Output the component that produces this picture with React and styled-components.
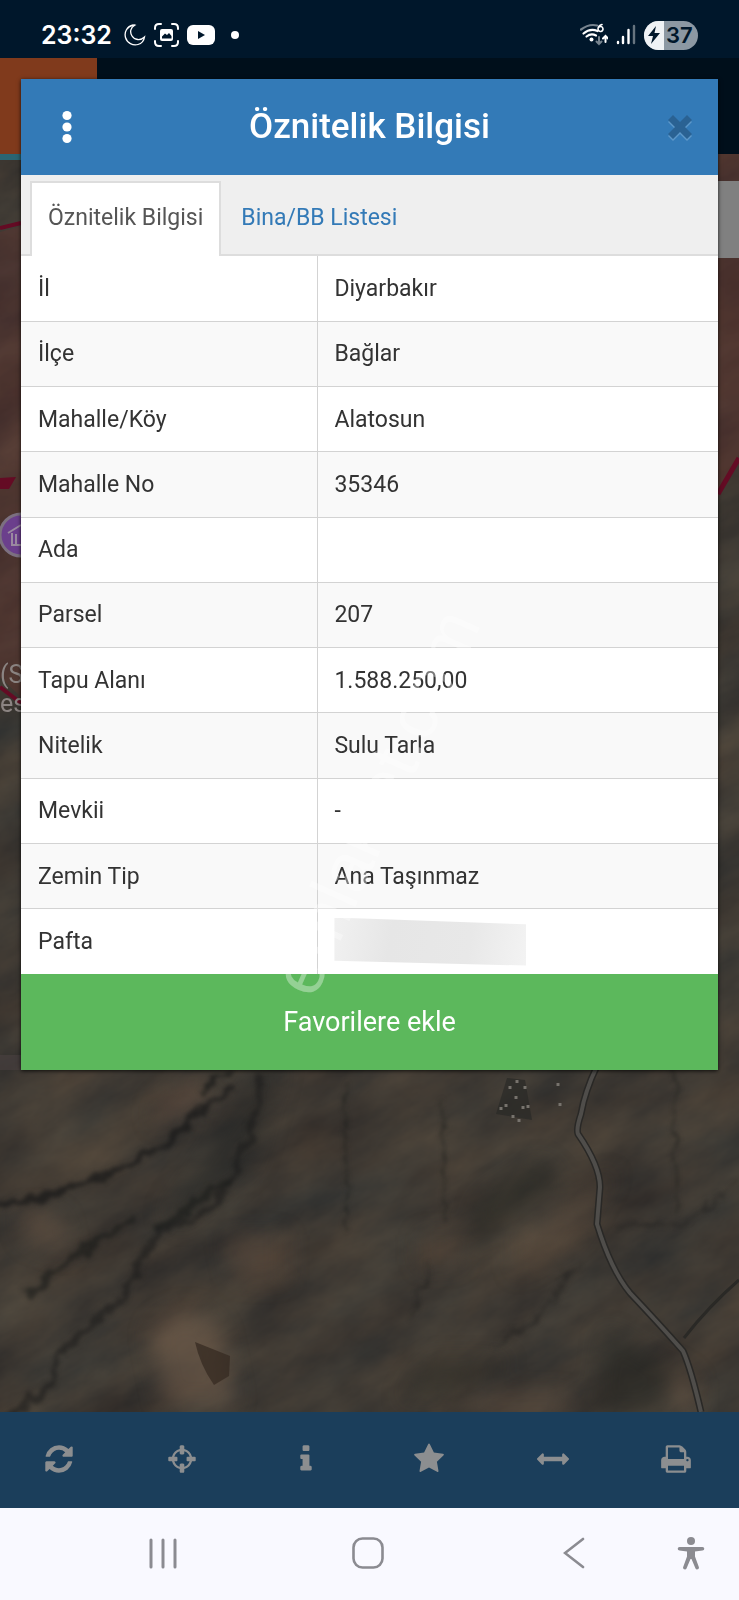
import React, { useState } from 'react'
import styled, { createGlobalStyle } from 'styled-components'

const attributes = [
  ['İl', 'Diyarbakır'],
  ['İlçe', 'Bağlar'],
  ['Mahalle/Köy', 'Alatosun'],
  ['Mahalle No', '35346'],
  ['Ada', ''],
  ['Parsel', '207'],
  ['Tapu Alanı', '1.588.250,00'],
  ['Nitelik', 'Sulu Tarla'],
  ['Mevkii', '-'],
  ['Zemin Tip', 'Ana Taşınmaz'],
  ['Pafta', null],
]

const tools = [
  {
    label: 'Yenile',
    d: 'M1639 1056q0 5-1 7-64 268-268 434.5t-478 166.5q-146 0-282.5-55t-243.5-157l-129 129q-19 19-45 19t-45-19-19-45v-448q0-26 19-45t45-19h448q26 0 45 19t19 45-19 45l-137 137q71 66 161 102t187 36q134 0 250-65t186-179q11-17 53-117 8-23 30-23h192q13 0 22.5 9.5t9.5 22.5zm25-800v448q0 26-19 45t-45 19h-448q-26 0-45-19t-19-45 19-45l138-138q-148-137-349-137-134 0-250 65t-186 179q-11 17-53 117-8 23-30 23h-199q-13 0-22.5-9.5t-9.5-22.5v-7q65-268 270-434.5t480-166.5q146 0 284 55.5t245 156.5l130-129q19-19 45-19t45 19 19 45z',
  },
  {
    label: 'Konumum',
    d: 'M1325 1024h-109q-26 0-45-19t-19-45v-128q0-26 19-45t45-19h109q-32-108-112.5-188.5t-188.5-112.5v109q0 26-19 45t-45 19h-128q-26 0-45-19t-19-45v-109q-108 32-188.5 112.5t-112.5 188.5h109q26 0 45 19t19 45v128q0 26-19 45t-45 19h-109q32 108 112.5 188.5t188.5 112.5v-109q0-26 19-45t45-19h128q26 0 45 19t19 45v109q108-32 188.5-112.5t112.5-188.5zm339-192v128q0 26-19 45t-45 19h-143q-37 161-154.5 278.5t-278.5 154.5v143q0 26-19 45t-45 19h-128q-26 0-45-19t-19-45v-143q-161-37-278.5-154.5t-154.5-278.5h-143q-26 0-45-19t-19-45v-128q0-26 19-45t45-19h143q37-161 154.5-278.5t278.5-154.5v-143q0-26 19-45t45-19h128q26 0 45 19t19 45v143q161 37 278.5 154.5t154.5 278.5h143q26 0 45 19t19 45z',
  },
  {
    label: 'Bilgi',
    d: 'M1216 1344v128q0 26-19 45t-45 19h-512q-26 0-45-19t-19-45v-128q0-26 19-45t45-19h64v-384h-64q-26 0-45-19t-19-45v-128q0-26 19-45t45-19h384q26 0 45 19t19 45v576h64q26 0 45 19t19 45zm-128-1152v192q0 26-19 45t-45 19h-256q-26 0-45-19t-19-45v-192q0-26 19-45t45-19h256q26 0 45 19t19 45z',
  },
  {
    label: 'Favoriler',
    d: 'M1728 647q0 22-26 48l-363 354 86 500q1 7 1 20 0 21-10.5 35.5t-30.5 14.5q-19 0-40-12l-449-236-449 236q-22 12-40 12-21 0-31.5-14.5t-10.5-35.5q0-6 2-20l86-500-364-354q-25-27-25-48 0-37 56-46l502-73 225-455q19-41 49-41t49 41l225 455 502 73q56 9 56 46z',
  },
  {
    label: 'Ölçüm',
    d: 'M1792 896q0 26-19 45l-256 256q-19 19-45 19t-45-19-19-45v-128h-1024v128q0 26-19 45t-45 19-45-19l-256-256q-19-19-19-45t19-45l256-256q19-19 45-19t45 19 19 45v128h1024v-128q0-26 19-45t45-19 45 19l256 256q19 19 19 45z',
  },
  {
    label: 'Yazdır',
    d: 'M448 1536h896v-256h-896v256zm0-640h896v-384h-160q-40 0-68-28t-28-68v-160h-640v640zm1152 64q0-26-19-45t-45-19-45 19-19 45 19 45 45 19 45-19 19-45zm128 0v416q0 13-9.5 22.5t-22.5 9.5h-224v160q0 40-28 68t-68 28h-960q-40 0-68-28t-28-68v-160h-224q-13 0-22.5-9.5t-9.5-22.5v-416q0-79 56.5-135.5t135.5-56.5h64v-544q0-40 28-68t68-28h672q40 0 88 20t76 48l152 152q28 28 48 76t20 88v256h64q79 0 135.5 56.5t56.5 135.5z',
  },
]

const StatusIcons = () => (
  <>
    <svg width="22" height="22" viewBox="0 0 22 22" fill="none" stroke="#fff" strokeWidth="1.3">
      <path d="M9 1C3 2.500 0 8 1.500 13.500S9 22 14 20.500c3.500-1 6-4 6.500-7.500-4 4-10 3-12.500-1S6.500 3.500 11 1C10.300.7 9.700.8 9 1z" />
    </svg>
    <svg width="25" height="24" viewBox="0 0 25 24" fill="none" stroke="#fff" strokeWidth="2" strokeLinecap="round">
      <path d="M7 1H5Q1 1 1 5v1M18 1h2q4 0 4 4v1M7 23H5q-4 0-4-4v-1M18 23h2q4 0 4-4v-1" />
      <rect x="6" y="6" width="13" height="12" rx="2" fill="#fff" stroke="none" />
      <path d="M8 15.500v-2l3-3 2 1.500 2-2 2.500 3v2.500z" fill="#00172b" stroke="none" />
    </svg>
    <svg width="28" height="20" viewBox="0 0 28 20">
      <rect width="28" height="20" rx="6" fill="#fff" />
      <path d="M11 6v8l7-4z" fill="#00172b" />
    </svg>
  </>
)

const SignalIcons = () => (
  <>
    <svg width="28" height="24" viewBox="0 0 28 24" fill="none" strokeWidth="2.200" strokeLinecap="round">
      <path d="M1 6.500Q9 .5 17 2.500" stroke="#77848f" />
      <path d="M3.500 10.500Q10 5 17.500 8M6.500 13.500q4.500-3.500 9.500-1" stroke="#fff" />
      <circle cx="11.500" cy="16.500" r="2" fill="#fff" />
      <path d="M19 14v7M16.500 18.500l2.500 2.500 2.500-2.500" stroke="#77848f" strokeWidth="2" />
      <path d="M25.500 19v-6M23 15.500l2.500-2.500 2.500 2.500" stroke="#fff" strokeWidth="2" />
      <path d="M22 1.500q-4 1-4 4.500a2.500 2.500 0 1 0 1-2" stroke="#fff" strokeWidth="1.600" />
    </svg>
    <svg width="20" height="22" viewBox="0 0 20 22" strokeWidth="2.400" strokeLinecap="round">
      <path d="M2 18v1M7 13v6M12.500 6v13" stroke="#fff" />
      <path d="M18 2v17" stroke="#66747f" />
    </svg>
  </>
)

// Dimmed aerial photo under the dialog
const Terrain = () => (
  <MapDrawing viewBox="0 154 739 1258" preserveAspectRatio="xMidYMid slice" aria-hidden="true">
    <defs>
      <filter id="grain" x="0" y="0" width="100%" height="100%" colorInterpolationFilters="sRGB">
        <feTurbulence type="fractalNoise" baseFrequency="0.009 0.02" numOctaves="6" seed="12" />
        <feColorMatrix values="0.17 0 0 0 0.16  0.13 0.03 0 0 0.145  0.08 0.04 0 0 0.14  0 0 0 0 1" />
      </filter>
      <filter id="soft" x="-30%" y="-30%" width="160%" height="160%" colorInterpolationFilters="sRGB">
        <feGaussianBlur stdDeviation="11" />
      </filter>
      <filter id="rough" x="-10%" y="-10%" width="120%" height="120%" colorInterpolationFilters="sRGB">
        <feTurbulence type="fractalNoise" baseFrequency="0.06" numOctaves="3" seed="4" />
        <feDisplacementMap in="SourceGraphic" scale="14" />
        <feGaussianBlur stdDeviation="2" />
      </filter>
    </defs>
    <rect x="-500" y="-200" width="1900" height="2000" filter="url(#grain)" transform="rotate(-28 370 780)" />
    <path d="M0 232l21-6v471l-21-20z" fill="#70302a" opacity=".3" />
    <path d="M718 154h21v301l-21 42z" fill="#70302a" opacity=".35" />
    <path d="M0 1055h21v15h-21z" fill="#55484a" opacity=".4" />
    <g filter="url(#soft)">
      <path d="M150 1330q40-40 70 0l15 75h-70z" fill="#7b6450" opacity=".5" />
      <path d="M225 1235h60v45h-50z" fill="#6b5242" opacity=".4" />
      <path d="M20 1210l40 5 10 40-45-15z" fill="#765b47" opacity=".45" />
      <path d="M155 1105l40-25 20 20-60 25z" fill="#6a5042" opacity=".5" />
      <path d="M420 1235h40v30h-40zM515 1240l100-70-40 70-60 35z" fill="#705b47" opacity=".4" />
      <path d="M605 1330l70 40-20 42h-60zM430 1360h80l-50 30-60 10z" fill="#242521" opacity=".5" />
      <path d="M480 1200l60-40 20 20-70 50-20 20z" fill="#252822" opacity=".5" />
      <path d="M670 1365l25 15v32h-20zM480 1395h90v17h-110z" fill="#755e49" opacity=".45" />
      <path d="M243 1095l20-30 20 0-30 100-70 60-20-10z" fill="#202221" opacity=".5" />
    </g>
    <g filter="url(#rough)" fill="none" stroke="#191a19">
      <path d="M0 1206Q60 1196 110 1174t70-44 55-42" strokeWidth="7" opacity=".75" />
      <path d="M263 1076q-10 60-22 80-10 30-30 55l-50 20-30 44-10 25-55 45-15 40-50 40" strokeWidth="6" opacity=".55" />
      <path d="M230 1180l-50 35-25 15M135 1218l-75 48-32 32" strokeWidth="7" opacity=".6" />
      <path d="M200 1093l30-25" strokeWidth="4" opacity=".8" />
      <path d="M346 1080v150M443 1100v120M675 1070v145M430 1265l-20 55" strokeWidth="2" opacity=".6" />
      <path d="M739 1180l-55 45-70 0M580 1265l-50 60-40 20" strokeWidth="3" opacity=".4" />
    </g>
    <path d="M195 1342l35 14-1 20-15 9q-14-20-19-43z" fill="#33281f" opacity=".7" />
    <path d="M507 1078l18 2 7 40-36-6z" fill="#292927" opacity=".7" />
    <path
      d="M510 1086v3m7-9v3m-11 21v3m10-11v3m9-13v3m-2 17v3m-10 6v3m15-13v3m-27-1v3m18 9v3m41-19v3m-2-23v3"
      stroke="#77736d"
      strokeWidth="3"
    />
    <g fill="none">
      <path d="M739 1280q-30 26-55 58" stroke="#2a2926" strokeWidth="3" />
      <path d="M597 1066q-12 25-16 48-5 15-3 20 22 32 22 53l-3 37q14 46 33 69 32 34 53 58 8 18 18 61" stroke="#292826" strokeWidth="7" />
      <path d="M597 1066q-12 25-16 48-5 15-3 20 22 32 22 53l-3 37q14 46 33 69 32 34 53 58 8 18 18 61" stroke="#4f4d4a" strokeWidth="4" />
      <path d="M0 228l21-5M0 687l21 16" stroke="#640b24" strokeWidth="4" />
      <path d="M739 458l-21 36" stroke="#640b24" strokeWidth="5" />
    </g>
    <path d="M0 154h97v6H0z" fill="#2b6573" />
    <path d="M0 478l16-1-7 12H0z" fill="#640b24" />
    <circle cx="21" cy="535" r="21" fill="#6b3f8c" stroke="#7c7080" strokeWidth="3" />
    <path d="M8 533l13-8M12 533v12h9M16 534v11" fill="none" stroke="#9a8aa0" strokeWidth="2" />
    <MapLabel x="0" y="683">(S</MapLabel>
    <MapLabel x="0" y="712">es</MapLabel>
  </MapDrawing>
)

const AttributeTable = () => (
  <Table>
    <tbody>
      {attributes.map(([name, value]) => (
        <Tr key={name}>
          <Th scope="row">{name}</Th>
          <Td>{value === null ? <Redacted /> : value}</Td>
        </Tr>
      ))}
    </tbody>
  </Table>
)

export default function App() {
  const [tab, setTab] = useState('info')

  return (
    <Page>
      <GlobalStyle />
      <StatusBar>
        <Clock>23:32</Clock>
        <StatusIcons />
        <Dot />
        <Spacer />
        <SignalIcons />
        <Battery>
          <Charge>
            <svg width="12" height="18" viewBox="0 0 12 18">
              <path d="M8 0L0 10h5l-2 8 9-11H6.500z" fill="#00172b" />
            </svg>
          </Charge>
          37
        </Battery>
      </StatusBar>

      <Main>
        <SiteHeader>
          <SiteLogo />
        </SiteHeader>
        <MapArea>
          <Terrain />
          <MapPanel />
        </MapArea>

        <Dialog role="dialog" aria-labelledby="dialog-title">
          <DialogHeader>
            <HeaderButton type="button" aria-label="Menü">
              <svg width="10" height="34" viewBox="0 0 10 34" fill="#fff">
                <circle cx="5" cy="5.500" r="4.600" />
                <circle cx="5" cy="17" r="4.600" />
                <circle cx="5" cy="28.500" r="4.600" />
              </svg>
            </HeaderButton>
            <Title id="dialog-title">Öznitelik Bilgisi</Title>
            <HeaderButton type="button" aria-label="Kapat">
              <svg width="26" height="28" viewBox="0 0 26 28">
                <path d="M6 4l7 7 7-7 5 5-7 7 7 7-5 5-7-7-7 7-5-5 7-7-7-7z" fill="#5c97c9" />
                <path d="M6 2l7 7 7-7 5 5-7 7 7 7-5 5-7-7-7 7-5-5 7-7-7-7z" fill="#2a6293" />
              </svg>
            </HeaderButton>
          </DialogHeader>
          <Tabs role="tablist">
            <Tab type="button" role="tab" aria-selected={tab === 'info'} $active={tab === 'info'} onClick={() => setTab('info')}>
              Öznitelik Bilgisi
            </Tab>
            <Tab type="button" role="tab" aria-selected={tab === 'list'} $active={tab === 'list'} onClick={() => setTab('list')}>
              Bina/BB Listesi
            </Tab>
          </Tabs>
          <AttributeTable />
          <AddButton type="button">Favorilere ekle</AddButton>
          <Watermark>emlakjet.com</Watermark>
        </Dialog>
      </Main>

      <Toolbar>
        {tools.map(({ label, d }) => (
          <ToolButton key={label} type="button" aria-label={label}>
            <svg width="32" height="32" viewBox="0 0 1792 1792" fill="currentColor">
              <path d={d} />
            </svg>
          </ToolButton>
        ))}
      </Toolbar>

      <SystemNav>
        <NavButton type="button" aria-label="Son uygulamalar">
          <svg width="30" height="32" viewBox="0 0 30 32" stroke="currentColor" strokeWidth="3" strokeLinecap="round">
            <path d="M3 3v27M15 3v27M27 3v27" />
          </svg>
        </NavButton>
        <NavButton type="button" aria-label="Ana ekran">
          <svg width="32" height="32" viewBox="0 0 32 32" fill="none" stroke="currentColor" strokeWidth="2.600">
            <rect x="1.500" y="1.500" width="29" height="29" rx="9" />
          </svg>
        </NavButton>
        <NavButton type="button" aria-label="Geri">
          <svg width="22" height="32" viewBox="0 0 22 32" fill="none" stroke="currentColor" strokeWidth="2.600" strokeLinecap="round">
            <path d="M20 2L2 16l18 14" />
          </svg>
        </NavButton>
        <NavButton type="button" aria-label="Erişilebilirlik">
          <svg width="28" height="34" viewBox="0 0 28 34" fill="currentColor">
            <circle cx="14" cy="5" r="4" />
            <path d="M2.500 11h23a1.700 1.700 0 0 1 0 3.600L18 15.500v5l4 11q0 2-2 2-1 0-1.500-1L14.500 23h-1L9.500 32.500q-.5 1-1.500 1-2 0-2-2l4-11v-5l-7.500-.9a1.700 1.700 0 0 1 0-3.600z" />
          </svg>
        </NavButton>
      </SystemNav>
    </Page>
  )
}

const GlobalStyle = createGlobalStyle`
  * {
    box-sizing: border-box;
  }
  body {
    margin: 0;
    font-family: Roboto, "Noto Sans", sans-serif;
  }
  button {
    font-family: inherit;
    margin: 0;
    padding: 0;
    border: 0;
    background: none;
  }
  svg {
    display: block;
    flex: none;
  }
`

const Page = styled.div`
  display: flex;
  flex-direction: column;
  min-height: 100vh;
  overflow: hidden;
`

const StatusBar = styled.div`
  display: flex;
  align-items: center;
  gap: 8px;
  height: 58px;
  padding: 12px 41px 0;
  background: #00172b;
`

const Clock = styled.span`
  margin-right: 4px;
  color: #fff;
  font-family: Inter, Roboto, sans-serif;
  font-size: 25px;
  font-weight: 600;
`

const Dot = styled.span`
  width: 8px;
  height: 8px;
  margin-left: 8px;
  border-radius: 50%;
  background: #fff;
`

const Spacer = styled.span`
  flex: 1;
`

const Battery = styled.span`
  display: flex;
  align-items: center;
  gap: 2px;
  width: 54px;
  height: 29px;
  border-radius: 15px;
  overflow: hidden;
  background: #8c98a3;
  color: #00172b;
  font-family: Inter, Roboto, sans-serif;
  font-size: 22px;
  font-weight: 600;
`

const Charge = styled.span`
  display: flex;
  align-items: center;
  justify-content: center;
  width: 20px;
  height: 100%;
  background: #eff2f5;
`

const Main = styled.main`
  position: relative;
  display: flex;
  flex-direction: column;
  flex: 1;
  min-height: 1040px;
`

const SiteHeader = styled.header`
  display: flex;
  height: 96px;
  background: #000f1b;
`

const SiteLogo = styled.div`
  width: 97px;
  background: #803a1c;
`

const MapArea = styled.div`
  position: relative;
  flex: 1;
  overflow: hidden;
  background: #3e3a34;
`

const MapDrawing = styled.svg`
  position: absolute;
  inset: 0;
  width: 100%;
  height: 100%;
`

const MapLabel = styled.text`
  fill: #8b8482;
  font-size: 25px;
`

const MapPanel = styled.div`
  position: absolute;
  top: 27px;
  right: 0;
  width: 60px;
  height: 77px;
  background: #808080;
`

const Dialog = styled.section`
  position: absolute;
  top: 21px;
  left: 21px;
  right: 21px;
  background: #fff;
  box-shadow: 0 1px 4px rgba(0, 0, 0, 0.8);
`

const DialogHeader = styled.header`
  display: flex;
  align-items: center;
  height: 96px;
  padding: 0 8px 0 16px;
  background: #337ab7;
`

const HeaderButton = styled.button`
  display: flex;
  align-items: center;
  justify-content: center;
  width: 60px;
  height: 60px;
`

const Title = styled.h1`
  flex: 1;
  margin: 0;
  padding-right: 8px;
  color: #fff;
  font-size: 35px;
  font-weight: 500;
  line-height: 40px;
  text-align: center;
`

const Tabs = styled.div`
  display: flex;
  align-items: flex-end;
  gap: 2px;
  height: 81px;
  padding-left: 9px;
  background: #efefef;
  box-shadow: inset 0 -2px #ddd;
`

const Tab = styled.button`
  height: 75px;
  padding: 0 16px 4px;
  border: 2px solid ${props => (props.$active ? '#ddd' : 'transparent')};
  border-bottom: 0;
  background: ${props => (props.$active ? '#fff' : 'none')};
  color: ${props => (props.$active ? '#555' : '#337ab7')};
  font-size: 23px;
`

const Table = styled.table`
  width: 100%;
  height: 718px;
  border-collapse: collapse;
  table-layout: fixed;
  color: #333;
  font-size: 23px;
`

const Tr = styled.tr`
  height: 65px;
  border-bottom: 1px solid #d3d3d3;

  &:nth-child(even) {
    background: #f9f9f9;
  }
  &:last-child {
    border-bottom: 0;
  }
`

const Th = styled.th`
  width: 42.6%;
  padding: 0 17px;
  border-right: 1px solid #d3d3d3;
  font-weight: 400;
  text-align: left;
`

const Td = styled.td`
  padding: 0 16px;
`

const Redacted = styled.div`
  width: 192px;
  height: 48px;
  background: linear-gradient(100deg, #f1f1f1, #e6e6e6 30%, #e8e8e8 70%, #f3f3f3);
  clip-path: polygon(0 0, 100% 14%, 100% 100%, 0 90%);
`

const AddButton = styled.button`
  display: block;
  width: 100%;
  height: 96px;
  background: #5cb85c;
  color: #fff;
  font-size: 27px;
`

const Watermark = styled.span`
  position: absolute;
  top: 73%;
  left: 51%;
  color: rgba(255, 255, 255, 0.35);
  font-family: "Liberation Sans", sans-serif;
  font-size: 70px;
  line-height: 70px;
  transform: translate(-50%, -50%) rotate(-66deg);
  pointer-events: none;
`

const Toolbar = styled.nav`
  display: flex;
  justify-content: space-between;
  height: 96px;
  padding: 0 33px 2px 29px;
  background: #1b3e5b;
`

const ToolButton = styled.button`
  display: flex;
  align-items: center;
  justify-content: center;
  width: 60px;
  color: #8c8e90;
`

const SystemNav = styled.nav`
  display: grid;
  grid-template-columns: repeat(3, 1fr) 28px;
  height: 92px;
  padding: 0 34px 2px 60px;
  background: #f9f9ff;
`

const NavButton = styled.button`
  display: flex;
  align-items: center;
  justify-content: center;
  color: #8b8b91;
`
